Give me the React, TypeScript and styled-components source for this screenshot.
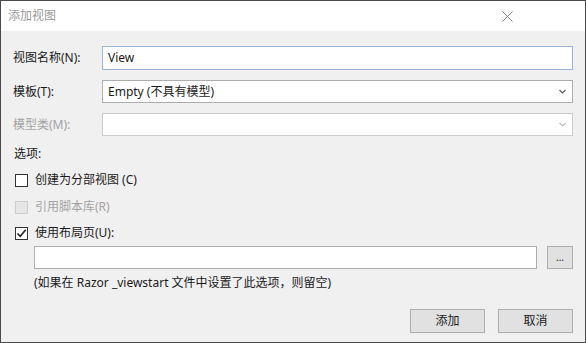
import React from "react";
import styled, { createGlobalStyle } from "styled-components";

const Global = createGlobalStyle`
  html, body { margin: 0; padding: 0; background: #f0f0f0; }
  body { font-family: "Noto Sans", "Noto Sans CJK SC", sans-serif; font-size: 12px; color: #1a1a1a; }
  * { box-sizing: border-box; }
`;

const Window = styled.div`
  width: 586px;
  height: 343px;
  border: 1px solid #4a4a4a;
  background: #f0f0f0;
  display: flex;
  flex-direction: column;
  overflow: hidden;
`;

const TitleBar = styled.div`
  height: 30px;
  background: #fff;
  display: flex;
  align-items: center;
  justify-content: space-between;
  padding: 0 0 0 7px;
`;

const Title = styled.span`
  font-family: "Noto Sans CJK SC", sans-serif;
  font-size: 12px;
  color: #9a9a9a;
  line-height: 16px;
  margin-top: -2px;
`;

const CloseBtn = styled.div`
  width: 46px;
  height: 30px;
  display: flex;
  align-items: center;
  justify-content: center;
  margin-right: 55px;
`;

const Body = styled.div`
  flex: 1;
  display: flex;
  flex-direction: column;
  padding: 15px 12px 0 12px;
`;

const FieldRow = styled.div<{ $mt?: number }>`
  display: grid;
  grid-template-columns: 89px 1fr;
  align-items: center;
  margin-top: ${(p) => p.$mt ?? 0}px;
`;

const Label = styled.label<{ $disabled?: boolean }>`
  line-height: 16px;
  color: ${(p) => (p.$disabled ? "#a3a3a3" : "#1a1a1a")};
`;

const TextInput = styled.div<{ $focus?: boolean }>`
  height: 24px;
  background: #fff;
  border: 1px solid ${(p) => (p.$focus ? "#9ab7da" : "#adadad")};
  display: flex;
  align-items: center;
  padding-left: 5px;
  line-height: 16px;
`;

const Select = styled.div<{ $disabled?: boolean }>`
  height: 23px;
  background: #fff;
  border: 1px solid ${(p) => (p.$disabled ? "#cccccc" : "#adadad")};
  display: flex;
  align-items: center;
  justify-content: space-between;
  padding: 0 6px 0 5px;
  line-height: 16px;
`;

const SectionLabel = styled.div`
  line-height: 16px;
  margin-top: 10px;
  padding-left: 1px;
`;

const CheckRow = styled.div<{ $mt: number; $disabled?: boolean }>`
  display: flex;
  align-items: center;
  gap: 7px;
  margin-top: ${(p) => p.$mt}px;
  padding-left: 2px;
  line-height: 16px;
  color: ${(p) => (p.$disabled ? "#a3a3a3" : "#1a1a1a")};
`;

const Box = styled.span<{ $disabled?: boolean }>`
  width: 13px;
  height: 13px;
  border: 1px solid ${(p) => (p.$disabled ? "#cccccc" : "#333333")};
  background: ${(p) => (p.$disabled ? "#e6e6e6" : "#fff")};
  display: inline-flex;
  align-items: center;
  justify-content: center;
  flex: none;
`;

const Indented = styled.div`
  padding-left: 21px;
  display: flex;
  flex-direction: column;
`;

const PathRow = styled.div`
  display: flex;
  gap: 10px;
  margin-top: 5px;
`;

const PathInput = styled.div`
  flex: 1;
  height: 23px;
  background: #fff;
  border: 1px solid #adadad;
`;

const SmallButton = styled.div`
  width: 26px;
  height: 23px;
  background: #e1e1e1;
  border: 1px solid #adadad;
  display: flex;
  align-items: center;
  justify-content: center;
  font-size: 10px;
  line-height: 10px;
  padding-bottom: 2px;
`;

const Hint = styled.div`
  line-height: 16px;
  margin-top: 6px;
`;

const Footer = styled.div`
  display: flex;
  justify-content: flex-end;
  gap: 13px;
  margin-top: 18px;
`;

const Button = styled.div`
  width: 75px;
  height: 24px;
  background: #e1e1e1;
  border: 1px solid #adadad;
  display: flex;
  align-items: center;
  justify-content: center;
  line-height: 16px;
`;

const Chevron = ({ color }: { color: string }) => (
  <svg width="7" height="5" viewBox="0 0 7 5">
    <path d="M0.5 1 L3.5 4 L6.5 1" fill="none" stroke={color} strokeWidth="1.1" />
  </svg>
);

export default function App() {
  return (
    <>
      <Global />
      <Window>
        <TitleBar>
          <Title>添加视图</Title>
          <CloseBtn>
            <svg width="11" height="11" viewBox="0 0 11 11">
              <path d="M0.5 0.5 L10.5 10.5 M10.5 0.5 L0.5 10.5" stroke="#8a8a8a" strokeWidth="1" />
            </svg>
          </CloseBtn>
        </TitleBar>
        <Body>
          <FieldRow>
            <Label>视图名称(N):</Label>
            <TextInput $focus>View</TextInput>
          </FieldRow>
          <FieldRow $mt={10}>
            <Label>模板(T):</Label>
            <Select>
              <span>Empty (不具有模型)</span>
              <Chevron color="#555" />
            </Select>
          </FieldRow>
          <FieldRow $mt={10}>
            <Label $disabled>模型类(M):</Label>
            <Select $disabled>
              <span />
              <Chevron color="#bbb" />
            </Select>
          </FieldRow>
          <SectionLabel>选项:</SectionLabel>
          <CheckRow $mt={10}>
            <Box />
            <span>创建为分部视图 (C)</span>
          </CheckRow>
          <CheckRow $mt={11} $disabled>
            <Box $disabled />
            <span>引用脚本库(R)</span>
          </CheckRow>
          <CheckRow $mt={10}>
            <Box>
              <svg width="11" height="11" viewBox="0 0 11 11">
                <path d="M1.5 5.5 L4.2 8.3 L9.8 1.8" fill="none" stroke="#222" strokeWidth="1.6" />
              </svg>
            </Box>
            <span>使用布局页(U):</span>
          </CheckRow>
          <Indented>
            <PathRow>
              <PathInput />
              <SmallButton>...</SmallButton>
            </PathRow>
            <Hint>(如果在 Razor _viewstart 文件中设置了此选项，则留空)</Hint>
          </Indented>
          <Footer>
            <Button>添加</Button>
            <Button>取消</Button>
          </Footer>
        </Body>
      </Window>
    </>
  );
}
